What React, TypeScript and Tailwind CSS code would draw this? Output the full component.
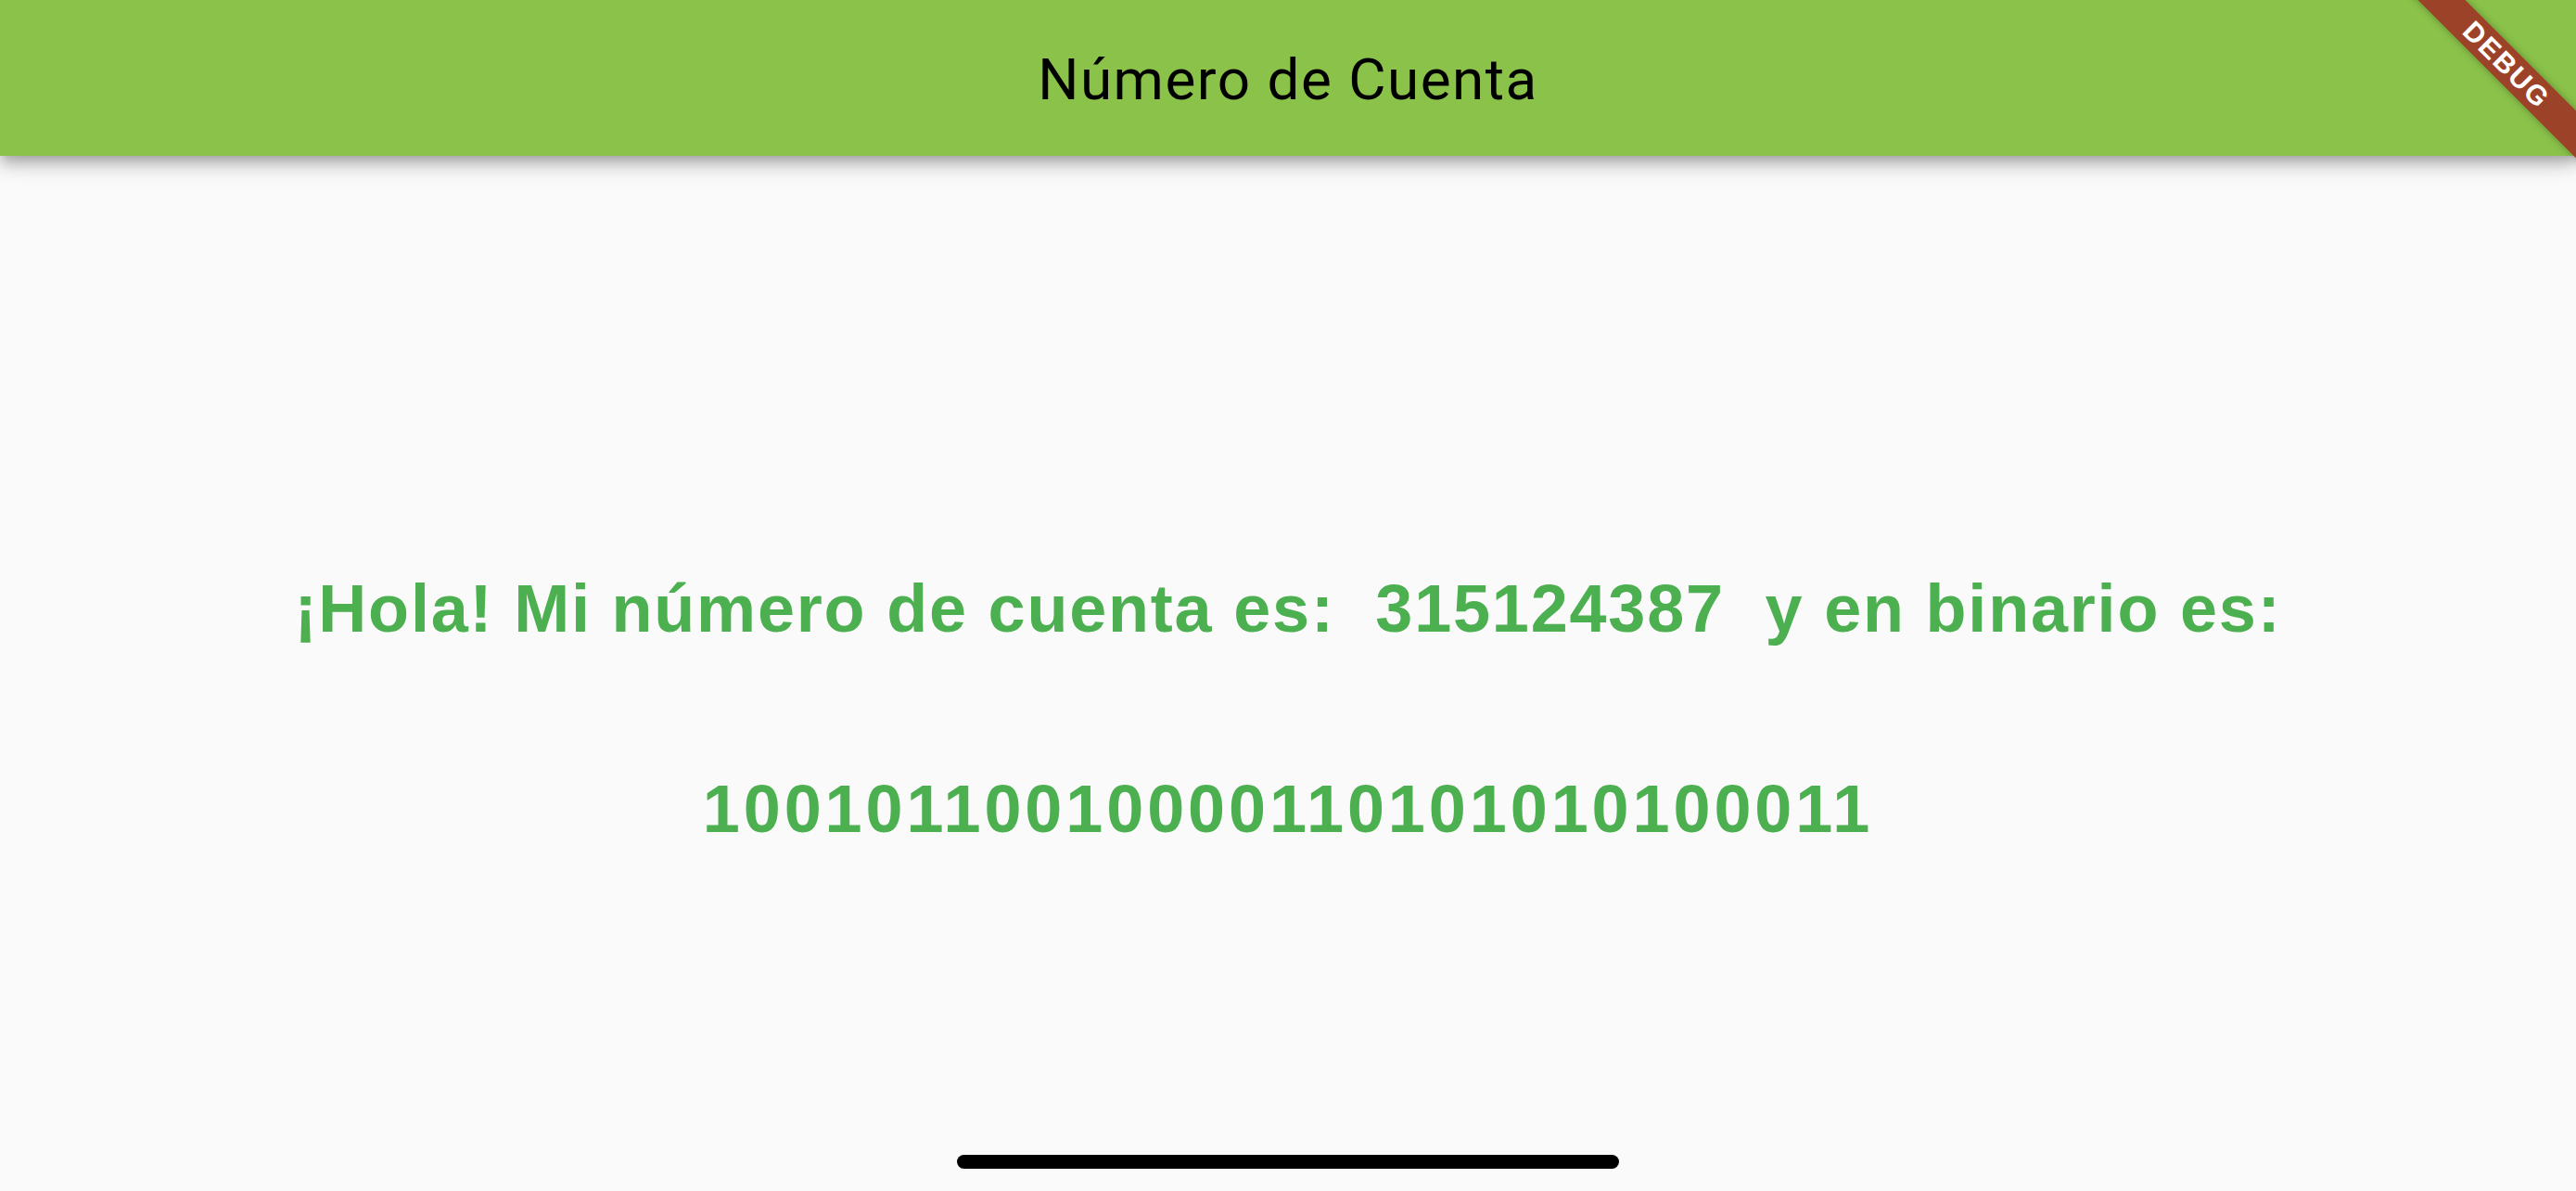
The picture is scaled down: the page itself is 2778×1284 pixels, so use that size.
const BINARY = (315124387).toString(2);

function DebugBanner() {
  // cinta diagonal de modo debug
  return (
    <div className="pointer-events-none absolute right-[-75px] top-[52px] z-20 flex h-[36px] w-[300px] rotate-45 items-center justify-center bg-[#9c4228] shadow-[0_0_10px_rgba(0,0,0,0.3)]">
      <span className="font-['Liberation_Sans',Arial,sans-serif] text-[30px] font-bold leading-none tracking-[2px] text-white">
        DEBUG
      </span>
    </div>
  );
}

export default function App() {
  return (
    <div className="relative h-[1284px] w-full overflow-hidden bg-[#fafafa]">
      {/* App bar */}
      <header className="relative z-10 flex h-[168px] items-center justify-center bg-[#8bc34a] pt-[2px] shadow-[0_6px_12px_-3px_rgba(0,0,0,0.2),0_12px_15px_0_rgba(0,0,0,0.14),0_3px_30px_0_rgba(0,0,0,0.12)]">
        <h1 className="font-['Roboto','Liberation_Sans',sans-serif] text-[62px] font-normal tracking-[1.5px] text-black">
          Número de Cuenta
        </h1>
      </header>

      {/* Body */}
      <main className="flex flex-col items-center pt-[445px] font-['Liberation_Sans',Arial,sans-serif] font-bold text-[#4caf50]">
        <p className="whitespace-pre text-[72px] leading-[86px] tracking-[1.8px]">
          {'¡Hola! Mi número de cuenta es:  315124387  y en binario es:'}
        </p>
        <p className="mt-[130px] text-[72px] leading-[86px] tracking-[3.9px]">{BINARY}</p>
      </main>

      {/* Home indicator */}
      <div className="absolute bottom-[24px] left-1/2 h-[15px] w-[714px] -translate-x-1/2 rounded-full bg-black" />

      <DebugBanner />
    </div>
  );
}
